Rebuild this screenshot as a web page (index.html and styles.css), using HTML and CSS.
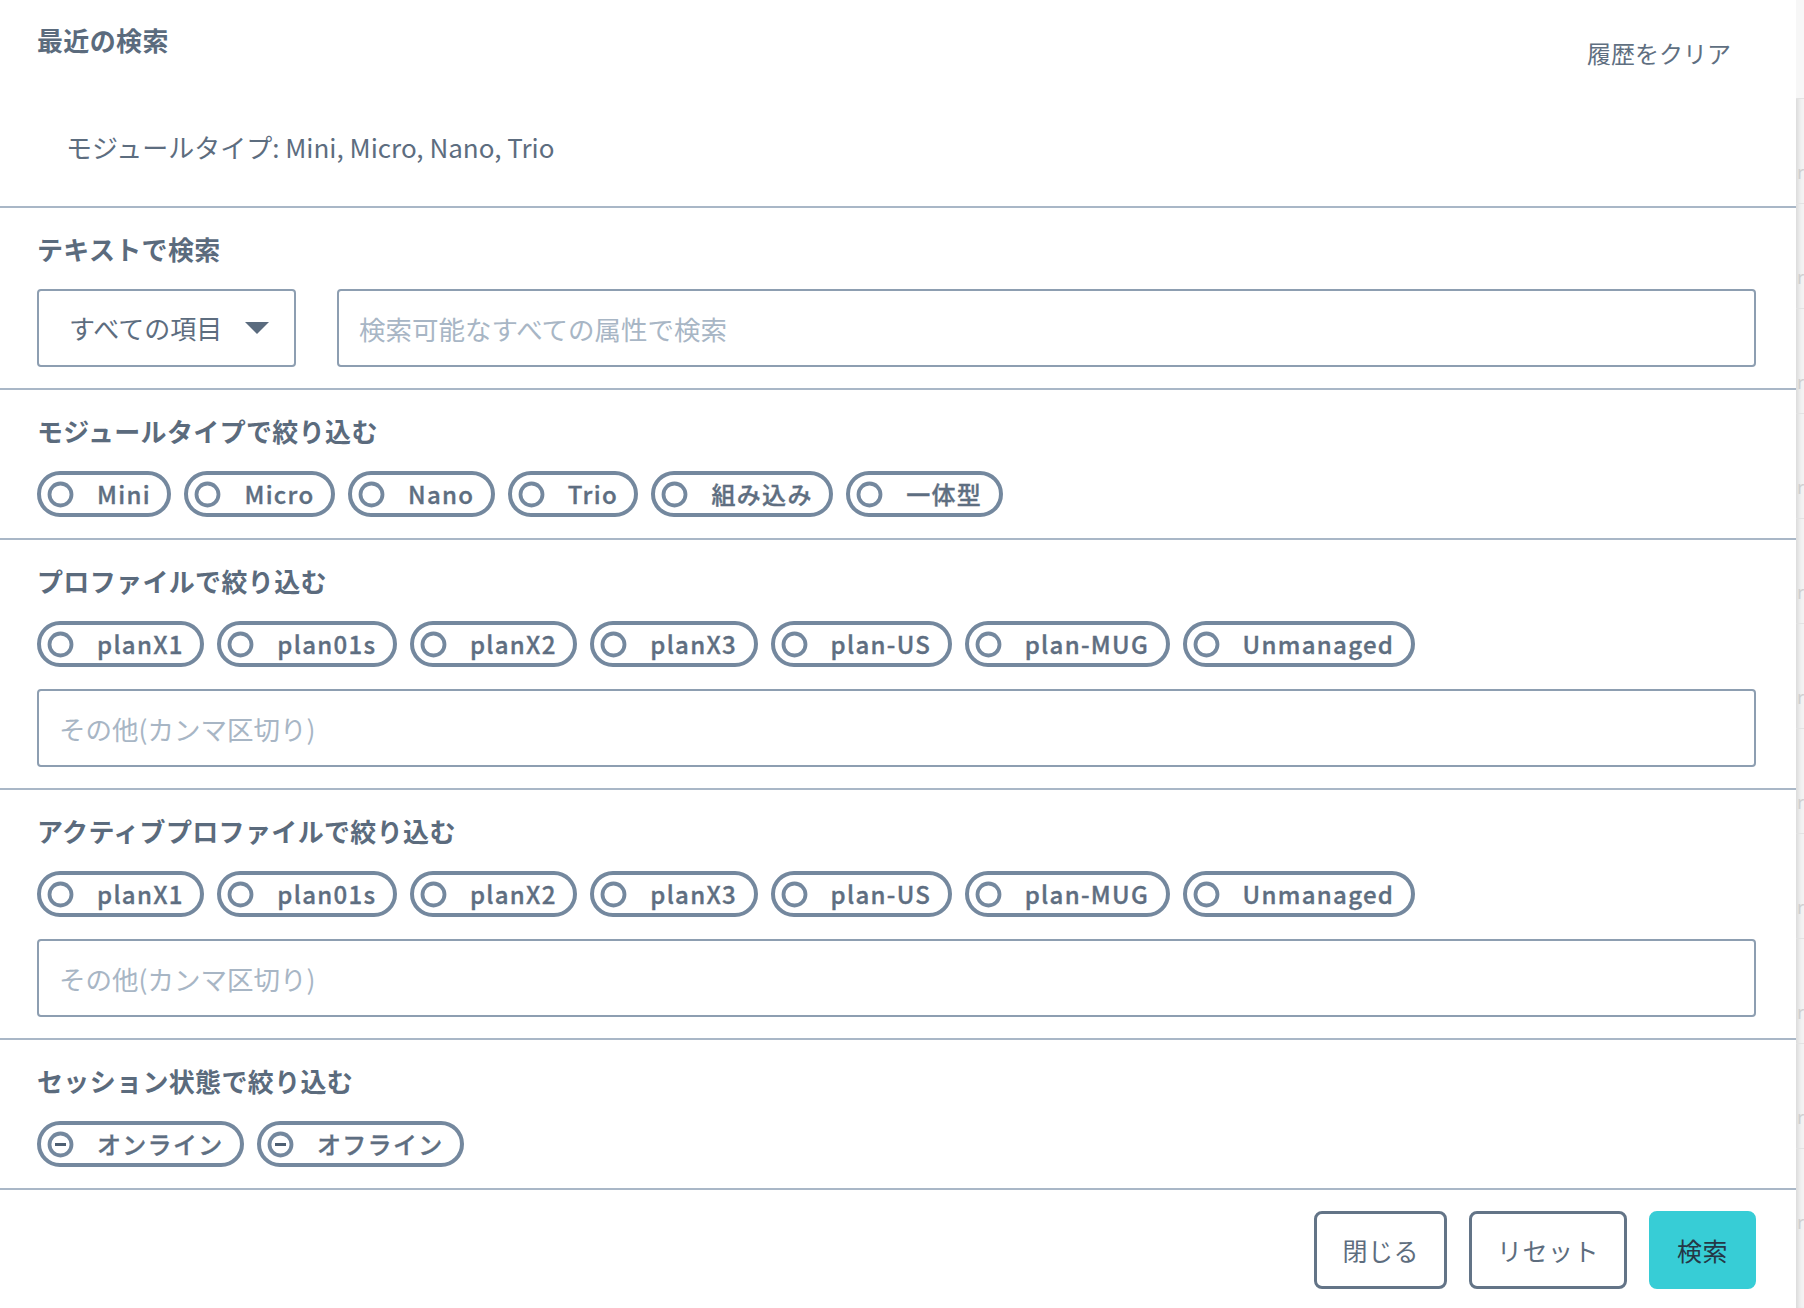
FILE: index.html
```html
<!DOCTYPE html>
<html lang="ja">
<head>
<meta charset="utf-8">
<title>検索</title>
<link rel="stylesheet" href="styles.css">
</head>
<body>
<div class="app">
  <div class="panel">
    <section class="sec recent">
      <div class="recent-head">
        <h2 class="title">最近の検索</h2>
        <a class="clear" href="#">履歴をクリア</a>
      </div>
      <ul class="recent-list">
        <li>モジュールタイプ: Mini, Micro, Nano, Trio</li>
      </ul>
    </section>

    <section class="sec">
      <h2 class="title">テキストで検索</h2>
      <div class="text-row">
        <button class="select" type="button"><span>すべての項目</span><svg class="caret" width="24" height="12" viewBox="0 0 24 12"><path d="M0 0H24L12 12Z" fill="#5a6b7e"/></svg></button>
        <input class="field grow" type="text" placeholder="検索可能なすべての属性で検索">
      </div>
    </section>

    <section class="sec">
      <h2 class="title">モジュールタイプで絞り込む</h2>
      <div class="chips">
        <label class="chip"><svg class="radio" viewBox="0 0 27 27"><circle cx="13.5" cy="13.5" r="11" fill="none" stroke="#74889e" stroke-width="3.8"/></svg><span>Mini</span></label>
        <label class="chip"><svg class="radio" viewBox="0 0 27 27"><circle cx="13.5" cy="13.5" r="11" fill="none" stroke="#74889e" stroke-width="3.8"/></svg><span>Micro</span></label>
        <label class="chip"><svg class="radio" viewBox="0 0 27 27"><circle cx="13.5" cy="13.5" r="11" fill="none" stroke="#74889e" stroke-width="3.8"/></svg><span>Nano</span></label>
        <label class="chip"><svg class="radio" viewBox="0 0 27 27"><circle cx="13.5" cy="13.5" r="11" fill="none" stroke="#74889e" stroke-width="3.8"/></svg><span>Trio</span></label>
        <label class="chip"><svg class="radio" viewBox="0 0 27 27"><circle cx="13.5" cy="13.5" r="11" fill="none" stroke="#74889e" stroke-width="3.8"/></svg><span>組み込み</span></label>
        <label class="chip"><svg class="radio" viewBox="0 0 27 27"><circle cx="13.5" cy="13.5" r="11" fill="none" stroke="#74889e" stroke-width="3.8"/></svg><span>一体型</span></label>
      </div>
    </section>

    <section class="sec">
      <h2 class="title">プロファイルで絞り込む</h2>
      <div class="chips">
        <label class="chip"><svg class="radio" viewBox="0 0 27 27"><circle cx="13.5" cy="13.5" r="11" fill="none" stroke="#74889e" stroke-width="3.8"/></svg><span>planX1</span></label>
        <label class="chip"><svg class="radio" viewBox="0 0 27 27"><circle cx="13.5" cy="13.5" r="11" fill="none" stroke="#74889e" stroke-width="3.8"/></svg><span>plan01s</span></label>
        <label class="chip"><svg class="radio" viewBox="0 0 27 27"><circle cx="13.5" cy="13.5" r="11" fill="none" stroke="#74889e" stroke-width="3.8"/></svg><span>planX2</span></label>
        <label class="chip"><svg class="radio" viewBox="0 0 27 27"><circle cx="13.5" cy="13.5" r="11" fill="none" stroke="#74889e" stroke-width="3.8"/></svg><span>planX3</span></label>
        <label class="chip"><svg class="radio" viewBox="0 0 27 27"><circle cx="13.5" cy="13.5" r="11" fill="none" stroke="#74889e" stroke-width="3.8"/></svg><span>plan-US</span></label>
        <label class="chip"><svg class="radio" viewBox="0 0 27 27"><circle cx="13.5" cy="13.5" r="11" fill="none" stroke="#74889e" stroke-width="3.8"/></svg><span>plan-MUG</span></label>
        <label class="chip"><svg class="radio" viewBox="0 0 27 27"><circle cx="13.5" cy="13.5" r="11" fill="none" stroke="#74889e" stroke-width="3.8"/></svg><span>Unmanaged</span></label>
      </div>
      <input class="field" type="text" placeholder="その他(カンマ区切り)">
    </section>

    <section class="sec">
      <h2 class="title">アクティブプロファイルで絞り込む</h2>
      <div class="chips">
        <label class="chip"><svg class="radio" viewBox="0 0 27 27"><circle cx="13.5" cy="13.5" r="11" fill="none" stroke="#74889e" stroke-width="3.8"/></svg><span>planX1</span></label>
        <label class="chip"><svg class="radio" viewBox="0 0 27 27"><circle cx="13.5" cy="13.5" r="11" fill="none" stroke="#74889e" stroke-width="3.8"/></svg><span>plan01s</span></label>
        <label class="chip"><svg class="radio" viewBox="0 0 27 27"><circle cx="13.5" cy="13.5" r="11" fill="none" stroke="#74889e" stroke-width="3.8"/></svg><span>planX2</span></label>
        <label class="chip"><svg class="radio" viewBox="0 0 27 27"><circle cx="13.5" cy="13.5" r="11" fill="none" stroke="#74889e" stroke-width="3.8"/></svg><span>planX3</span></label>
        <label class="chip"><svg class="radio" viewBox="0 0 27 27"><circle cx="13.5" cy="13.5" r="11" fill="none" stroke="#74889e" stroke-width="3.8"/></svg><span>plan-US</span></label>
        <label class="chip"><svg class="radio" viewBox="0 0 27 27"><circle cx="13.5" cy="13.5" r="11" fill="none" stroke="#74889e" stroke-width="3.8"/></svg><span>plan-MUG</span></label>
        <label class="chip"><svg class="radio" viewBox="0 0 27 27"><circle cx="13.5" cy="13.5" r="11" fill="none" stroke="#74889e" stroke-width="3.8"/></svg><span>Unmanaged</span></label>
      </div>
      <input class="field" type="text" placeholder="その他(カンマ区切り)">
    </section>

    <section class="sec">
      <h2 class="title">セッション状態で絞り込む</h2>
      <div class="chips">
        <label class="chip"><svg class="radio" viewBox="0 0 27 27"><circle cx="13.5" cy="13.5" r="11" fill="none" stroke="#74889e" stroke-width="3.8"/><path d="M8 13.5H19" stroke="#4e5f72" stroke-width="3"/></svg><span>オンライン</span></label>
        <label class="chip"><svg class="radio" viewBox="0 0 27 27"><circle cx="13.5" cy="13.5" r="11" fill="none" stroke="#74889e" stroke-width="3.8"/><path d="M8 13.5H19" stroke="#4e5f72" stroke-width="3"/></svg><span>オフライン</span></label>
      </div>
    </section>

    <footer class="actions">
      <button class="btn" type="button">閉じる</button>
      <button class="btn" type="button">リセット</button>
      <button class="btn primary" type="button">検索</button>
    </footer>
  </div>

  <div class="backdrop">
    <div class="bd-head"></div>
    <div class="bd-row">r</div>
    <div class="bd-row">r</div>
    <div class="bd-row">r</div>
    <div class="bd-row">r</div>
    <div class="bd-row">r</div>
    <div class="bd-row">r</div>
    <div class="bd-row">r</div>
    <div class="bd-row">r</div>
    <div class="bd-row">r</div>
    <div class="bd-row">r</div>
    <div class="bd-row">r</div>
  </div>
</div>
</body>
</html>
```

FILE: styles.css
```css
* { box-sizing: border-box; }

html, body {
  margin: 0;
  padding: 0;
  background: #ffffff;
}

body {
  font-family: "Noto Sans CJK JP", "Noto Sans", "Liberation Sans", sans-serif;
  color: #5d6d7f;
}

.app {
  display: flex;
  width: 1804px;
  height: 1308px;
  overflow: hidden;
}

.panel {
  flex: none;
  width: 1796px;
  background: #ffffff;
  display: flex;
  flex-direction: column;
}

/* sections */
.sec {
  display: flex;
  flex-direction: column;
  gap: 22px;
  padding: 23px 40px 21px 37px;
}

.sec + .sec,
.actions {
  border-top: 2px solid #a9b7c7;
}

.title {
  margin: 0;
  font-size: 26px;
  line-height: 36px;
  font-weight: 700;
  letter-spacing: 0.35px;
  color: #5b6b7d;
}

/* recent */
.recent {
  display: block;
  padding: 22px 65px 41px 37px;
}

.recent-head {
  display: flex;
  justify-content: space-between;
  align-items: flex-start;
  height: 36px;
}

.clear {
  margin-top: 13px;
  font-size: 24px;
  line-height: 36px;
  color: #5f6f81;
  text-decoration: none;
}

.recent-list {
  list-style: none;
  margin: 71px 0 0;
  padding: 0 0 0 29px;
  font-size: 26px;
  line-height: 36px;
  color: #5d6d7f;
}

/* text search row */
.text-row {
  display: flex;
  gap: 41px;
}

.select {
  flex: none;
  width: 259px;
  height: 78px;
  display: flex;
  align-items: center;
  justify-content: space-between;
  padding: 0 25px 0 30px;
  background: #ffffff;
  border: 2px solid #8d9eb1;
  border-radius: 4px;
  font-family: inherit;
  font-size: 26px;
  line-height: 36px;
  color: #5d6d7f;
}

.caret {
  display: block;
  flex: none;
}

.field {
  display: block;
  width: 100%;
  height: 78px;
  padding: 0 20px;
  border: 2px solid #8d9eb1;
  border-radius: 4px;
  background: #ffffff;
  font-family: inherit;
  font-size: 26.5px;
  color: #5d6d7f;
  outline: none;
}

.field.grow {
  flex: 1;
  width: auto;
}

.field::placeholder {
  color: #a8b6c5;
  opacity: 1;
}

/* chips */
.chips {
  display: flex;
  flex-wrap: wrap;
  gap: 13px;
}

.chip {
  display: inline-flex;
  align-items: center;
  height: 46px;
  padding: 0 16.5px 0 6px;
  border: 4px solid #74889e;
  border-radius: 23px;
  font-size: 24px;
  font-weight: 500;
  letter-spacing: 1.3px;
  color: #5e6e81;
  -webkit-text-stroke: 0.35px #5e6e81;
  background: #ffffff;
  white-space: nowrap;
}

.radio {
  flex: none;
  width: 27px;
  height: 27px;
  margin-right: 23px;
  display: block;
}

.chip span {
  line-height: 30px;
}

/* footer buttons */
.actions {
  display: flex;
  justify-content: flex-end;
  gap: 22px;
  padding: 21px 40px 19px 37px;
}

.btn {
  height: 78px;
  padding: 0 25px;
  border: 3px solid #637487;
  border-radius: 8px;
  background: #ffffff;
  font-family: inherit;
  font-size: 25px;
  letter-spacing: 0.5px;
  color: #5d6d7e;
}

.btn.primary {
  background: #37cdd6;
  border-color: #37cdd6;
  color: #253746;
}

/* partially visible page behind the panel */
.backdrop {
  flex: 1;
  background: #f3f3f3;
  box-shadow: inset 5px 0 5px -3px rgba(0, 0, 0, 0.12);
  display: flex;
  flex-direction: column;
  overflow: hidden;
}

.bd-head {
  flex: none;
  height: 98px;
  background: #f7f7f7;
}

.bd-row {
  flex: none;
  height: 105px;
  border-top: 1px solid #e3e3e3;
  display: flex;
  align-items: center;
  font-family: "Noto Sans CJK JP", sans-serif;
  font-size: 18px;
  line-height: 20px;
  color: #cfcfcf;
  padding-top: 40px;
  padding-left: 1px;
}
```
